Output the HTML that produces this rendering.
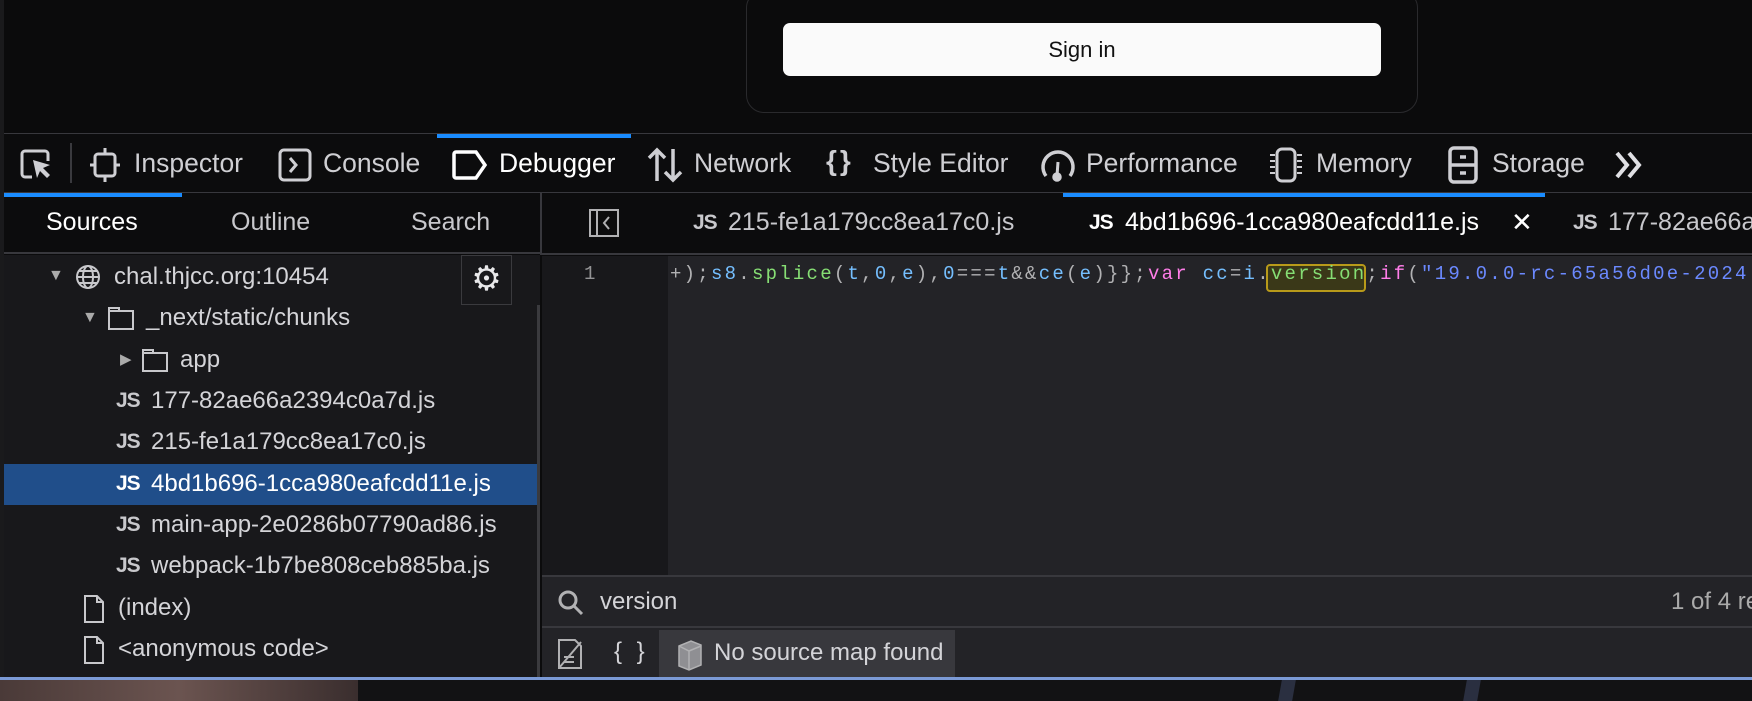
<!DOCTYPE html>
<html><head><meta charset="utf-8"><style>
*{margin:0;padding:0;box-sizing:border-box}
body{width:1752px;height:701px;background:#0b0b0c;position:relative;overflow:hidden;font-family:"Liberation Sans",sans-serif;color:#d7d7db}
.a{position:absolute;white-space:nowrap}
.tb{font-size:26.5px;color:#cfcfd3;top:148px}
.sub{font-size:25px;top:208px;color:#c8c8cc}
.tr{font-size:24px;color:#d4d4d8}
.js{font-weight:bold;font-size:21px;color:#c8c8cc;letter-spacing:-1px}
.code{font-family:"Liberation Mono",monospace;font-size:19px;letter-spacing:2.25px;top:263px;left:670px;color:#b1b1b3}
svg{position:absolute}
</style></head><body>
<!-- page -->
<div class="a" style="left:746px;top:-10px;width:672px;height:123px;border:1px solid #2a2a2d;border-radius:18px;background:#0b0b0c"></div>
<div class="a" style="left:783px;top:23px;width:598px;height:53px;background:#fafafa;border-radius:7px;color:#111;font-size:22px;text-align:center;line-height:53px">Sign in</div>
<div class="a" style="left:0;top:0;width:4px;height:701px;background:#1a1a1c"></div>
<!-- toolbar -->
<div class="a" style="left:4px;top:133px;width:1748px;height:60px;background:#0c0c0d;border-top:1px solid #38383d;border-bottom:1px solid #38383d"></div>
<div class="a" style="left:437px;top:134px;width:194px;height:4px;background:#1a8cff"></div>
<svg style="left:20px;top:149px" width="34" height="32" viewBox="0 0 34 32" fill="none" stroke="#cfcfd3" stroke-width="3"><path d="M12 28H5a3 3 0 0 1-3-3V5a3 3 0 0 1 3-3h20a3 3 0 0 1 3 3v7"/><path d="M13 11l4 18 3-7 7 7 3-3-7-7 7-3z" fill="#cfcfd3" stroke="none"/></svg>
<div class="a" style="left:70px;top:143px;width:2px;height:40px;background:#3a3a3e"></div>
<svg style="left:90px;top:147px" width="30" height="36" viewBox="0 0 30 36" fill="none" stroke="#cfcfd3" stroke-width="3"><rect x="5" y="7" width="20" height="22" rx="3"/><path d="M15 1v6M15 29v6M0 18h5M25 18h5"/></svg>
<div class="a tb" style="left:134px">Inspector</div>
<svg style="left:278px;top:148px" width="34" height="34" viewBox="0 0 34 34" fill="none" stroke="#cfcfd3" stroke-width="3"><rect x="2" y="2" width="30" height="30" rx="4"/><path d="M12 10l6 7-6 7"/></svg>
<div class="a tb" style="left:323px">Console</div>
<svg style="left:452px;top:150px" width="36" height="30" viewBox="0 0 36 30" fill="none" stroke="#fff" stroke-width="3.5"><path d="M4 2h20l9 13-9 13H4a2 2 0 0 1-2-2V4a2 2 0 0 1 2-2z"/></svg>
<div class="a tb" style="left:499px;color:#fff">Debugger</div>
<svg style="left:647px;top:147px" width="36" height="36" viewBox="0 0 36 36" fill="none" stroke="#cfcfd3" stroke-width="3.5"><path d="M10 34V3M2 11l8-8 8 8M26 2v31M18 25l8 8 8-8"/></svg>
<div class="a tb" style="left:694px">Network</div>
<div class="a tb" style="left:826px;font-weight:bold;letter-spacing:3px;top:145px;font-size:28px">{}</div>
<div class="a tb" style="left:873px">Style Editor</div>
<svg style="left:1040px;top:146px" width="36" height="38" viewBox="0 0 36 38" fill="none" stroke="#cfcfd3" stroke-width="3.5"><path d="M6 30A15 15 0 1 1 30 30"/><path d="M18 16l-1 14" stroke-width="3"/><circle cx="17" cy="31" r="3" fill="#cfcfd3"/></svg>
<div class="a tb" style="left:1086px">Performance</div>
<svg style="left:1268px;top:147px" width="36" height="36" viewBox="0 0 36 36" fill="none" stroke="#cfcfd3" stroke-width="3"><rect x="9" y="2" width="18" height="32" rx="5"/><path d="M2 8h5M2 14h5M2 20h5M2 26h5M29 8h5M29 14h5M29 20h5M29 26h5" stroke-width="2"/></svg>
<div class="a tb" style="left:1316px">Memory</div>
<svg style="left:1448px;top:146px" width="30" height="38" viewBox="0 0 30 38" fill="none" stroke="#cfcfd3" stroke-width="3.5"><rect x="2" y="2" width="26" height="34" rx="4"/><path d="M2 19h26M12 11h6M12 27h6"/></svg>
<div class="a tb" style="left:1492px">Storage</div>
<svg style="left:1614px;top:150px" width="30" height="30" viewBox="0 0 30 30" fill="none" stroke="#e0e0e4" stroke-width="4"><path d="M3 3l10 12-10 12M15 3l10 12-10 12"/></svg>
<!-- left panel -->
<div class="a" style="left:4px;top:193px;width:536px;height:61px;background:#0c0c0d;border-bottom:2px solid #38383d"></div>
<div class="a" style="left:4px;top:193px;width:178px;height:4px;background:#1a8cff"></div>
<div class="a sub" style="left:46px;color:#fff">Sources</div>
<div class="a sub" style="left:231px">Outline</div>
<div class="a sub" style="left:411px">Search</div>
<div class="a" style="left:4px;top:255px;width:536px;height:422px;background:#18181b"></div>
<div class="a" style="left:537px;top:305px;width:3px;height:372px;background:#3a3a3e"></div>
<div class="a" style="left:461px;top:255px;width:51px;height:50px;border:1px solid #3a3a3e;background:#18181b;color:#e8e8ea;font-size:34px;text-align:center;line-height:46px">⚙</div>
<div class="a" style="left:4px;top:464px;width:533px;height:41px;background:#204e8a"></div>
<div class="a tr" style="left:48px;top:267px;font-size:16px;color:#aaa">▼</div>
<svg style="left:75px;top:264px" width="26" height="26" viewBox="0 0 26 26" fill="none" stroke="#c8c8cc" stroke-width="2"><circle cx="13" cy="13" r="11"/><ellipse cx="13" cy="13" rx="5" ry="11"/><path d="M2 13h22M4 7h18M4 19h18"/></svg>
<div class="a tr" style="left:114px;top:263px">chal.thjcc.org:10454</div>
<div class="a tr" style="left:82px;top:309px;font-size:16px;color:#aaa">▼</div>
<svg style="left:107px;top:305px" width="28" height="26" viewBox="0 0 28 26" fill="none" stroke="#c8c8cc" stroke-width="2"><path d="M2 3h10v3h14v18H2z M2 6h10"/></svg>
<div class="a tr" style="left:146px;top:304px">_next/static/chunks</div>
<div class="a tr" style="left:120px;top:350px;font-size:15px;color:#aaa">▶</div>
<svg style="left:141px;top:347px" width="28" height="26" viewBox="0 0 28 26" fill="none" stroke="#c8c8cc" stroke-width="2"><path d="M2 3h10v3h14v18H2z M2 6h10"/></svg>
<div class="a tr" style="left:180px;top:346px">app</div>
<div class="a js" style="left:116px;top:389px">JS</div><div class="a tr" style="left:151px;top:387px">177-82ae66a2394c0a7d.js</div>
<div class="a js" style="left:116px;top:430px">JS</div><div class="a tr" style="left:151px;top:428px">215-fe1a179cc8ea17c0.js</div>
<div class="a js" style="left:116px;top:472px;color:#fff">JS</div><div class="a tr" style="left:151px;top:470px;color:#fff">4bd1b696-1cca980eafcdd11e.js</div>
<div class="a js" style="left:116px;top:513px">JS</div><div class="a tr" style="left:151px;top:511px">main-app-2e0286b07790ad86.js</div>
<div class="a js" style="left:116px;top:554px">JS</div><div class="a tr" style="left:151px;top:552px">webpack-1b7be808ceb885ba.js</div>
<svg style="left:83px;top:594px" width="22" height="30" viewBox="0 0 22 30" fill="none" stroke="#c8c8cc" stroke-width="2"><path d="M2 2h12l6 6v20H2z M14 2v6h6"/></svg>
<div class="a tr" style="left:118px;top:594px">(index)</div>
<svg style="left:83px;top:635px" width="22" height="30" viewBox="0 0 22 30" fill="none" stroke="#c8c8cc" stroke-width="2"><path d="M2 2h12l6 6v20H2z M14 2v6h6"/></svg>
<div class="a tr" style="left:118px;top:635px">&lt;anonymous code&gt;</div>
<!-- editor -->
<div class="a" style="left:540px;top:193px;width:1212px;height:62px;background:#0c0c0d;border-left:2px solid #38383d;border-bottom:2px solid #38383d"></div>
<div class="a" style="left:1063px;top:193px;width:482px;height:4px;background:#1a8cff"></div>
<svg style="left:589px;top:209px" width="30" height="28" viewBox="0 0 30 28" fill="none" stroke="#b1b1b3" stroke-width="2"><rect x="1" y="1" width="28" height="26"/><path d="M8 1v26M20 8l-5 6 5 6"/></svg>
<div class="a js" style="left:693px;top:211px">JS</div><div class="a sub" style="left:728px;top:208px">215-fe1a179cc8ea17c0.js</div>
<div class="a js" style="left:1089px;top:211px;color:#fff">JS</div><div class="a sub" style="left:1125px;top:208px;color:#fff">4bd1b696-1cca980eafcdd11e.js</div>
<div class="a sub" style="left:1511px;top:207px;color:#fff;font-size:26px">✕</div>
<div class="a js" style="left:1573px;top:211px">JS</div><div class="a sub" style="left:1608px;top:208px">177-82ae66a</div>
<div class="a" style="left:542px;top:256px;width:126px;height:319px;background:#18181b"></div>
<div class="a" style="left:668px;top:256px;width:1084px;height:319px;background:#232327"></div>
<div class="a" style="left:584px;top:263px;font-family:'Liberation Mono',monospace;font-size:19px;color:#939395">1</div>
<div class="a" style="left:1266px;top:264px;width:100px;height:28px;border:2px solid #b89a1a;background:#3a3818;border-radius:4px"></div>
<div class="a code">+);<span style="color:#75bfff">s8</span>.<span style="color:#86de74">splice</span>(<span style="color:#75bfff">t</span>,<span style="color:#75bfff">0</span>,<span style="color:#75bfff">e</span>),<span style="color:#75bfff">0</span>===<span style="color:#75bfff">t</span>&amp;&amp;<span style="color:#75bfff">ce</span>(<span style="color:#75bfff">e</span>)}};<span style="color:#ff7de9">var</span> <span style="color:#75bfff">cc</span>=<span style="color:#75bfff">i</span>.<span style="color:#86de74">version</span>;<span style="color:#ff7de9">if</span>(<span style="color:#6b89ff">"19.0.0-rc-65a56d0e-2024</span></div>
<!-- search bar -->
<div class="a" style="left:542px;top:575px;width:1210px;height:53px;background:#232327;border-top:2px solid #38383d;border-bottom:2px solid #38383d"></div>
<svg style="left:557px;top:589px" width="28" height="28" viewBox="0 0 28 28" fill="none" stroke="#b1b1b3" stroke-width="3"><circle cx="11" cy="11" r="8"/><path d="M17 17l8 8"/></svg>
<div class="a tr" style="left:600px;top:588px">version</div>
<div class="a tr" style="left:1671px;top:588px;color:#aaa">1 of 4 re</div>
<!-- footer -->
<div class="a" style="left:542px;top:628px;width:1210px;height:49px;background:#232327"></div>
<div class="a" style="left:659px;top:630px;width:296px;height:47px;background:#38383d"></div>
<svg style="left:556px;top:637px" width="28" height="34" viewBox="0 0 28 34" fill="none" stroke="#b1b1b3" stroke-width="2"><path d="M3 3h16l6 6v22H3z M3 31L25 5 M8 20h10M8 25h10"/></svg>
<div class="a tr" style="left:614px;top:638px;font-size:24px;letter-spacing:4px">{ }</div>
<svg style="left:676px;top:638px" width="28" height="34" viewBox="0 0 28 34" fill="#8f8f93" stroke="#b1b1b3" stroke-width="1.5"><path d="M3 8l12-5 10 4v20l-12 5-10-4z"/><path d="M3 8l10 5 12-5M13 13v19" fill="none"/></svg>
<div class="a tr" style="left:714px;top:639px">No source map found</div>
<!-- bottom -->
<div class="a" style="left:0;top:677px;width:1752px;height:3px;background:#7b9ad6"></div>
<div class="a" style="left:0;top:680px;width:1752px;height:21px;background:#121214"></div>
<div class="a" style="left:0;top:680px;width:358px;height:21px;background:linear-gradient(90deg,#4a3a38,#6b5450 50%,#3a2e2e)"></div>
<div class="a" style="left:1280px;top:680px;width:14px;height:21px;background:#2a2f40;transform:skewX(-10deg)"></div>
<div class="a" style="left:1465px;top:680px;width:14px;height:21px;background:#2a2f40;transform:skewX(-10deg)"></div>
</body></html>
